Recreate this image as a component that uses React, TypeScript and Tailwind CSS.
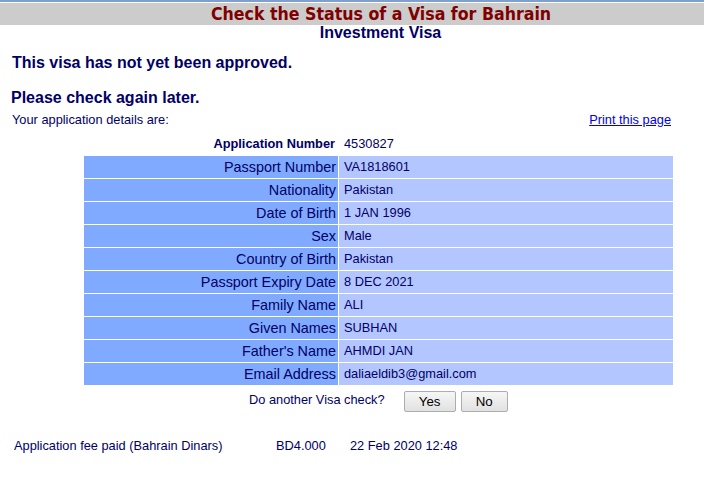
import React from 'react';

// Visa status result page

const details: [string, string][] = [
  ['Passport Number', 'VA1818601'],
  ['Nationality', 'Pakistan'],
  ['Date of Birth', '1 JAN 1996'],
  ['Sex', 'Male'],
  ['Country of Birth', 'Pakistan'],
  ['Passport Expiry Date', '8 DEC 2021'],
  ['Family Name', 'ALI'],
  ['Given Names', 'SUBHAN'],
  ["Father's Name", 'AHMDI JAN'],
  ['Email Address', 'daliaeldib3@gmail.com'],
];

const Button: React.FC<{ label: string; width: string }> = ({ label, width }) => (
  <button
    className={`${width} h-[21px] rounded-[2px] border border-[#adadad] bg-gradient-to-b from-[#f6f6f6] to-[#e1e1e1] text-[13.3px] leading-[19px] text-black`}
  >
    {label}
  </button>
);

export default function App() {
  return (
    <div className="w-[704px] h-[486px] overflow-hidden bg-white font-['Liberation_Sans',Arial,sans-serif] text-[#000066]">
      {/* top strip + title bar */}
      <div className="h-[2px] bg-[#7f9fd0]" />
      <div className="h-px bg-white" />
      <div className="h-[22px] bg-[#cccccc]">
        <div className="w-[762px] text-center font-['DejaVu_Sans_Condensed','DejaVu_Sans',sans-serif] font-bold text-[17.6px] leading-[22px] text-[#800000]">
          Check the Status of a Visa for Bahrain
        </div>
      </div>

      <div className="w-[761px] text-center font-bold text-[16px] leading-[16px]">Investment Visa</div>

      <div className="mt-[12px] ml-[12px] font-bold text-[16px] leading-[20px]">
        This visa has not yet been approved.
      </div>
      <div className="mt-[15px] ml-[11px] font-bold text-[16px] leading-[20px]">Please check again later.</div>

      <div className="mt-[4px] flex w-[671px] items-center justify-between pl-[12px] text-[12.8px] leading-[16px]">
        <span>Your application details are:</span>
        <a href="#" className="text-[#0000ee] underline">
          Print this page
        </a>
      </div>

      {/* details table */}
      <div className="mt-[5px] ml-[84px] flex w-[589px] flex-col gap-px">
        <div className="flex h-[22px] items-center gap-px">
          <div className="w-[254px] pr-[3px] text-right text-[12.8px] font-bold">Application Number</div>
          <div className="pl-[5px] text-[12.8px]">4530827</div>
        </div>
        {details.map(([label, value]) => (
          <div key={label} className="flex h-[22px] gap-px">
            <div className="flex w-[254px] items-center justify-end bg-[#7faaff] pr-[2px] text-[14.4px] leading-[18px]">
              {label}
            </div>
            <div className="flex flex-1 items-center bg-[#b4c6ff] pl-[5px] text-[12.8px]">{value}</div>
          </div>
        ))}
      </div>

      <div className="mt-[6px] ml-[249px] flex items-start text-[12.8px] leading-[16px]">
        <span className="mt-px">Do another Visa check?</span>
        <div className="ml-[19px] flex gap-[5px]">
          <Button label="Yes" width="w-[52px]" />
          <Button label="No" width="w-[47px]" />
        </div>
      </div>

      <div className="mt-[26px] ml-[14px] flex text-[12.8px] leading-[16px]">
        <span className="w-[262px]">Application fee paid (Bahrain Dinars)</span>
        <span className="w-[74px]">BD4.000</span>
        <span>22 Feb 2020 12:48</span>
      </div>
    </div>
  );
}
